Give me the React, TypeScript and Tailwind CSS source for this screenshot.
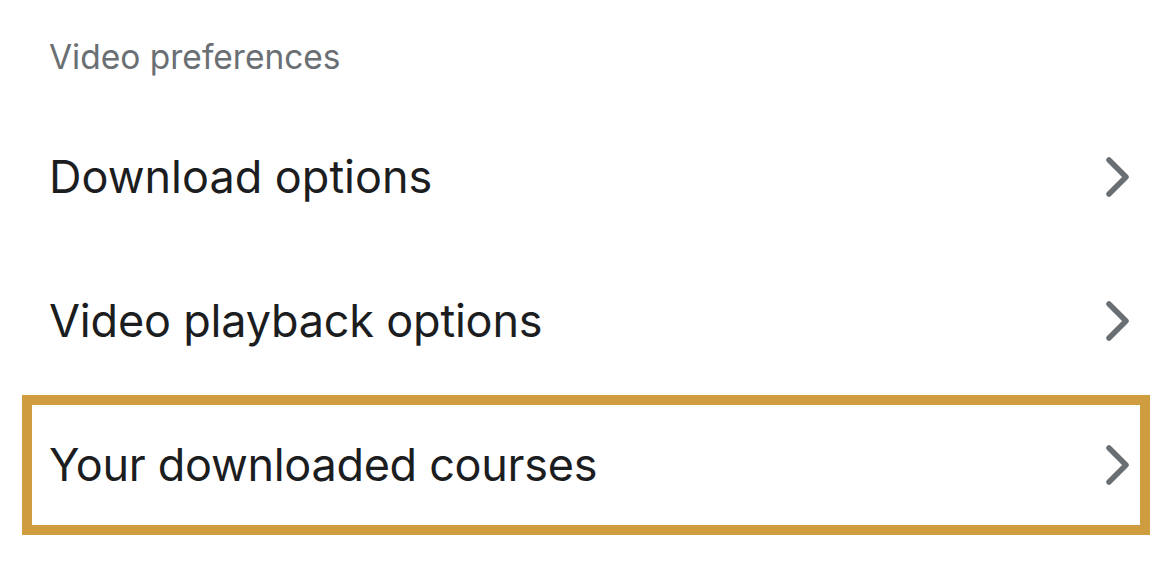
import React from "react";

function Chevron() {
  return (
    <svg width="24" height="40" viewBox="0 0 24 40" fill="none" className="shrink-0">
      <path d="M3 3 L20 20 L3 37" stroke="#6a6f73" strokeWidth="5.5" strokeLinecap="round" strokeLinejoin="round" />
    </svg>
  );
}

export default function App() {
  const font = { fontFamily: "Inter, 'Noto Sans', sans-serif" };
  return (
    <div className="w-[1158px] h-[576px] bg-white overflow-hidden" style={font}>
      <div className="h-[105px] pl-[49px] pt-[40px] text-[33.5px] leading-[34px] text-[#6a6f73]">
        Video preferences
      </div>
      <div className="h-[144px] flex items-center justify-between pl-[49px] pr-[28px] text-[45px] text-[#1c1d1f]">
        <span>Download options</span>
        <Chevron />
      </div>
      <div className="h-[144px] flex items-center justify-between pl-[49px] pr-[28px] text-[45px] text-[#1c1d1f]">
        <span className="tracking-[-0.2px]">Video playback options</span>
        <Chevron />
      </div>
      <div className="h-[144px] py-[2px] px-[8px] ml-[14px]">
        <div className="h-[140px] w-[1128px] border-[10px] border-[#cf9d40] flex items-center justify-between pl-[17px] pr-[10px] text-[45px] text-[#1c1d1f]">
          <span className="tracking-[-0.3px]">Your downloaded courses</span>
          <Chevron />
        </div>
      </div>
    </div>
  );
}
